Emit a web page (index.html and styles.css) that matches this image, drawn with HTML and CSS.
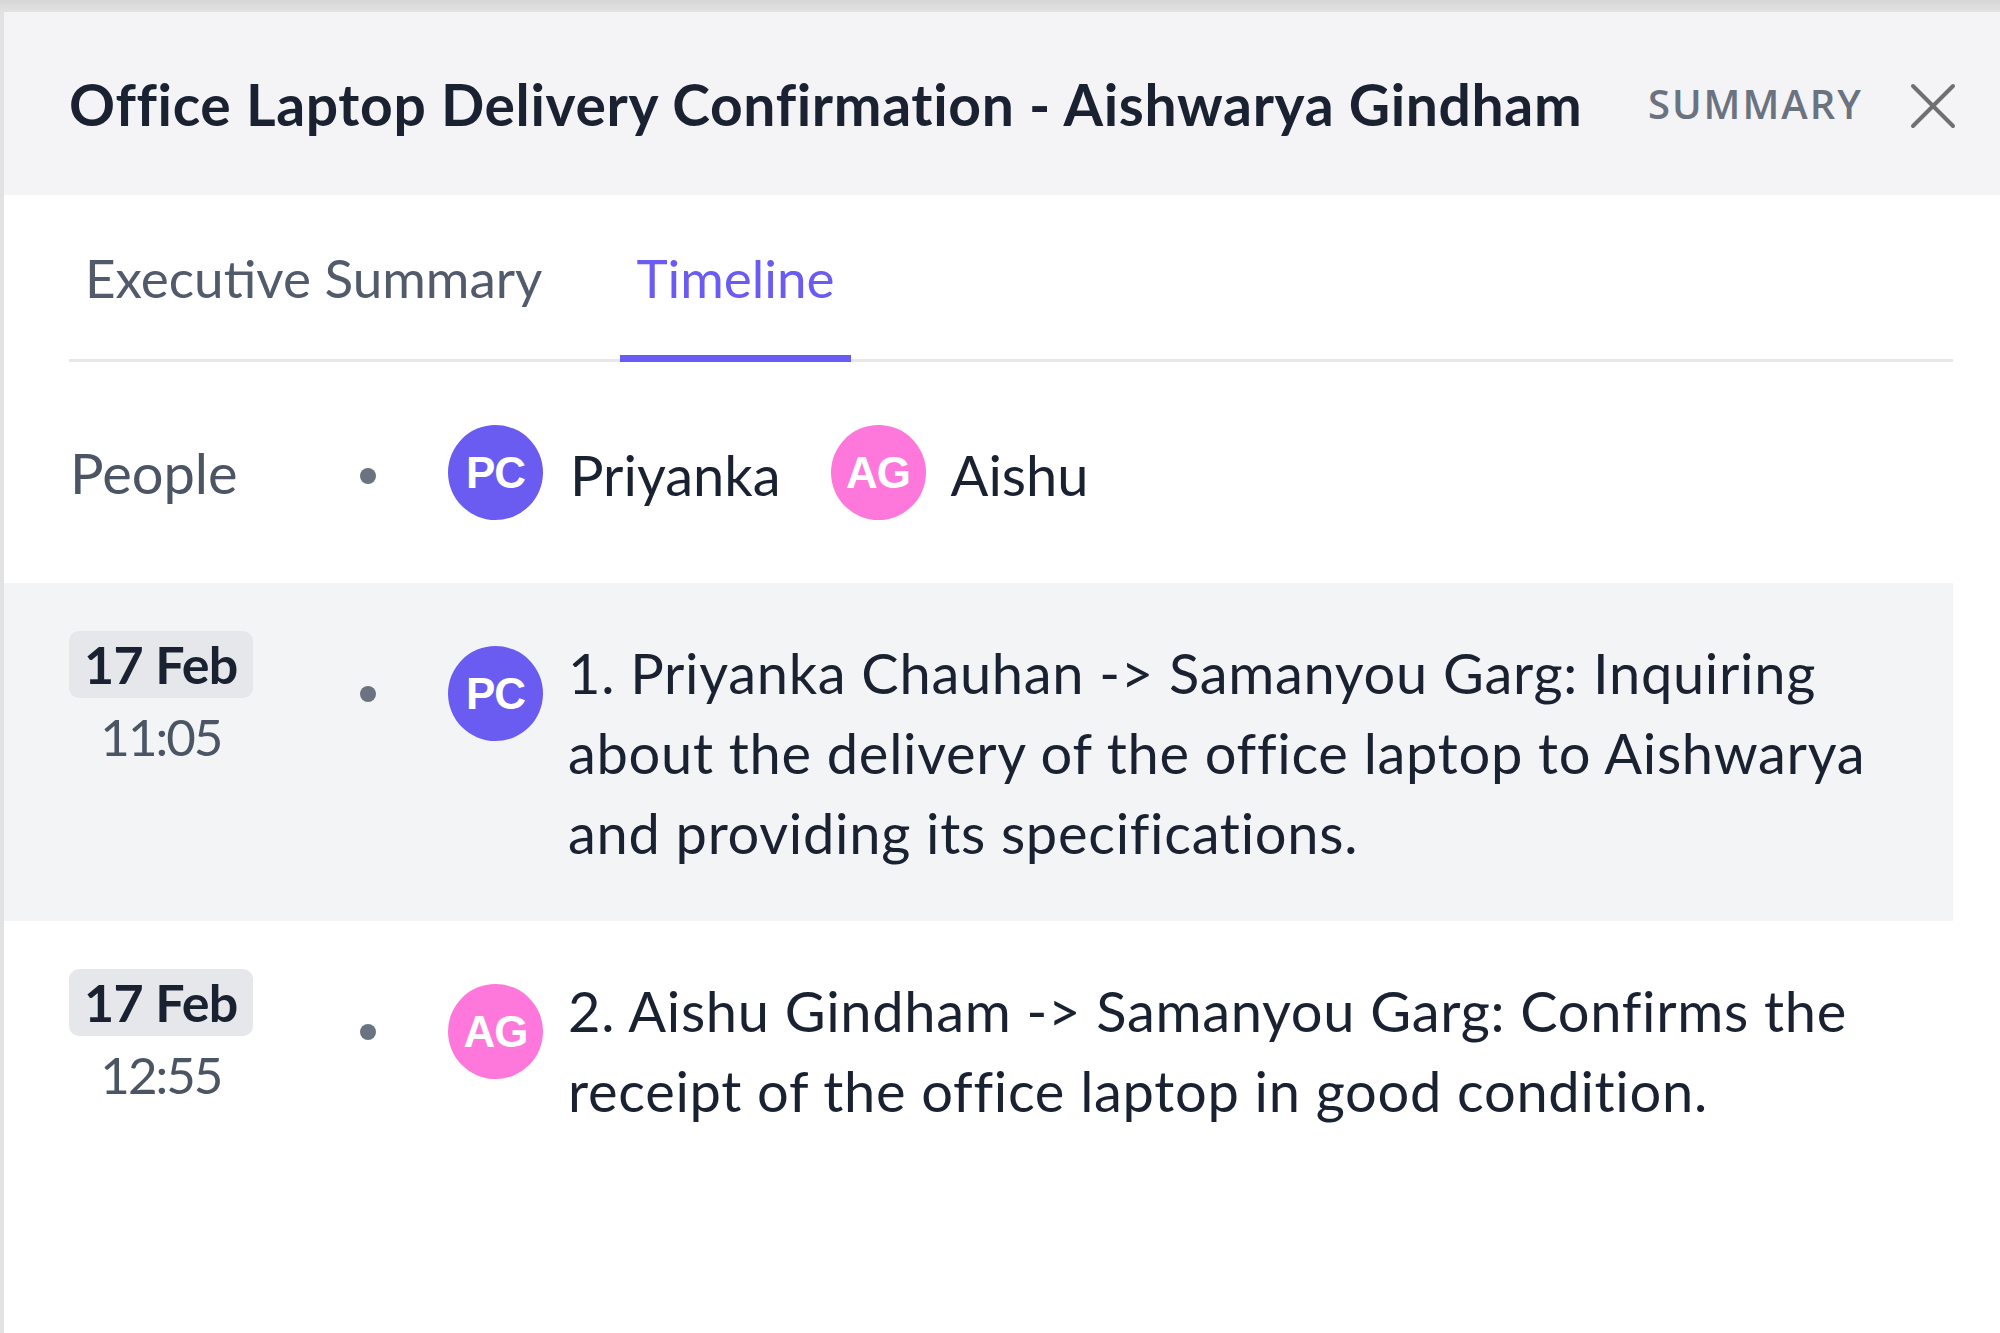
FILE: index.html
```html
<!DOCTYPE html>
<html lang="en">
<head>
<meta charset="utf-8">
<title>Office Laptop Delivery Confirmation</title>
<link rel="stylesheet" href="styles.css">
</head>
<body>
<div class="panel">
  <header class="header">
    <h1 class="title">Office Laptop Delivery Confirmation - Aishwarya Gindham</h1>
    <div class="actions">
      <span class="summary">SUMMARY</span>
      <button class="close" aria-label="Close">
        <svg viewBox="0 0 46 46" width="46" height="46"><path d="M3 3L43 43M43 3L3 43" stroke="#707070" stroke-width="4" stroke-linecap="round" fill="none"/></svg>
      </button>
    </div>
  </header>

  <nav class="tabs">
    <div class="tab">Executive Summary</div>
    <div class="tab active">Timeline</div>
  </nav>

  <div class="people">
    <div class="when label">People</div>
    <span class="dot"></span>
    <div class="people-list">
      <span class="avatar pc">PC</span><span class="name">Priyanka</span>
      <span class="avatar ag">AG</span><span class="name">Aishu</span>
    </div>
  </div>

  <div class="event shaded">
    <div class="when">
      <div class="stamp"><span class="date">17 Feb</span><span class="time">11:05</span></div>
    </div>
    <span class="dot"></span>
    <span class="avatar pc">PC</span>
    <p class="desc">1. Priyanka Chauhan -&gt; Samanyou Garg: Inquiring about the delivery of the office laptop to Aishwarya and providing its specifications.</p>
  </div>

  <div class="event">
    <div class="when">
      <div class="stamp"><span class="date">17 Feb</span><span class="time">12:55</span></div>
    </div>
    <span class="dot"></span>
    <span class="avatar ag">AG</span>
    <p class="desc">2. Aishu Gindham -&gt; Samanyou Garg: Confirms the receipt of the office laptop in good condition.</p>
  </div>
</div>
</body>
</html>
```

FILE: styles.css
```css
* { box-sizing: border-box; }

html, body {
  margin: 0;
  padding: 0;
}

body {
  background: linear-gradient(#d6d6d6, #e2e2e2 12px);
  font-family: Lato, "Noto Sans", sans-serif;
  color: #1f2937;
  overflow: hidden;
}

.panel {
  margin: 12px 0 0 4px;
  background: #ffffff;
  min-height: calc(100vh - 12px);
}

/* Header */
.header {
  height: 183px;
  background: #f4f4f6;
  display: flex;
  align-items: center;
  justify-content: space-between;
  padding: 0 44px 0 65px;
}

.title {
  margin: 0;
  font-size: 57px;
  font-weight: 700;
  color: #1a2232;
  white-space: nowrap;
  letter-spacing: 0.65px;
}

.actions {
  display: flex;
  align-items: center;
  gap: 47px;
}

.summary {
  font-size: 40px;
  font-weight: 600;
  letter-spacing: 2px;
  color: #6b7280;
  font-family: "Open Sans", Lato, sans-serif;
}

.close {
  border: 0;
  background: none;
  padding: 0;
  width: 46px;
  height: 46px;
  display: flex;
  margin-top: 4px;
}

/* Tabs */
.tabs {
  display: flex;
  gap: 62px;
  margin: 0 47px 0 65px;
  border-bottom: 3px solid #e6e7eb;
}

.tab {
  padding: 51px 16px 46px;
  font-size: 53px;
  line-height: 63px;
  color: #525b6b;
  border-bottom: 7px solid transparent;
  margin-bottom: -3px;
}

.tab.active {
  color: #6a5cf2;
  border-bottom-color: #6a5cf2;
}

/* Rows */
.people,
.event {
  display: flex;
  margin-right: 47px;
  padding-left: 65px;
}

.people {
  height: 221px;
  align-items: center;
}

.event {
  align-items: flex-start;
  padding-top: 48px;
  padding-bottom: 48px;
  padding-right: 40px;
}

.event.shaded {
  background: #f3f4f6;
}

.when {
  width: 291px;
  flex: none;
}

.label {
  font-size: 56px;
  color: #4b5563;
  padding-left: 1px;
}

.dot {
  width: 16px;
  height: 16px;
  border-radius: 50%;
  background: #6b7280;
  flex: none;
}

.people .dot {
  margin-top: 6px;
}

.event .dot {
  margin-top: 55px;
}

.people-list {
  display: flex;
  align-items: center;
  margin-left: 72px;
}

.avatar {
  width: 95px;
  height: 95px;
  border-radius: 50%;
  flex: none;
  display: flex;
  align-items: center;
  justify-content: center;
  color: #ffffff;
  font-family: "Liberation Sans", Arial, sans-serif;
  font-weight: 700;
  font-size: 44px;
  letter-spacing: -1px;
}

.avatar.pc { background: #6b5cf1; }
.avatar.ag { background: #fe78dc; }

.event .avatar {
  margin-left: 72px;
  margin-top: 15px;
}

.name {
  font-size: 56px;
  color: #1a2232;
  margin-left: 27px;
  margin-right: 50px;
  padding-top: 4px;
}

.name:last-child { margin-right: 0; margin-left: 25px; }

.stamp {
  display: inline-flex;
  flex-direction: column;
  align-items: center;
}

.date {
  background: #e6e7eb;
  border-radius: 10px;
  padding: 0 15px;
  font-size: 52px;
  font-weight: 700;
  letter-spacing: -0.6px;
  line-height: 67px;
  color: #1a2232;
}

.time {
  font-size: 51px;
  letter-spacing: -2px;
  line-height: 77px;
  color: #4b5563;
}

.desc {
  margin: 2px 0 0 25px;
  font-size: 56px;
  line-height: 80px;
  letter-spacing: 0.7px;
  color: #1a2232;
  flex: 1;
}
```
